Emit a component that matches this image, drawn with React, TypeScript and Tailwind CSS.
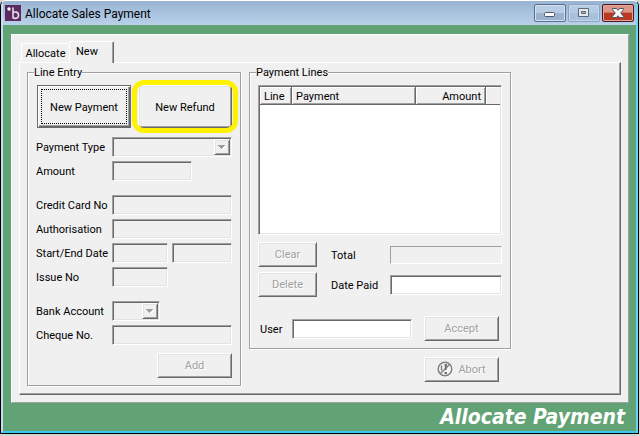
import React from 'react';
import { clsx } from 'clsx';

const SUNKEN =
  'border border-t-[#a0a0a0] border-l-[#a0a0a0] border-r-white border-b-white shadow-[inset_1px_1px_0_#696969,inset_-1px_-1px_0_#e3e3e3]';
const RAISED =
  'border border-t-white border-l-white border-r-[#696969] border-b-[#696969] shadow-[inset_1px_1px_0_#e3e3e3,inset_-1px_-1px_0_#a0a0a0]';

interface PushButtonProps {
  children: React.ReactNode;
  className?: string;
  disabled?: boolean;
}

const PushButton: React.FC<PushButtonProps> = ({ children, className, disabled }) => (
  <button
    type="button"
    disabled={disabled}
    className={clsx(
      RAISED,
      'flex items-center justify-center bg-[#f0f0f0]',
      disabled && 'text-[#a0a0a0] [text-shadow:1px_1px_0_#fff]',
      className
    )}
  >
    {children}
  </button>
);

interface FieldProps {
  id: string;
  className?: string;
  disabled?: boolean;
  label?: string;
}

const Field: React.FC<FieldProps> = ({ id, className, disabled, label }) => (
  <input
    id={id}
    type="text"
    aria-label={label}
    disabled={disabled}
    className={clsx(SUNKEN, 'h-5 min-w-0 px-1 outline-none', disabled ? 'bg-[#f0f0f0]' : 'bg-white', className)}
  />
);

const Combo: React.FC<{ id: string; className?: string }> = ({ id, className }) => (
  <div className={clsx('relative h-5', className)}>
    <select id={id} disabled className={clsx(SUNKEN, 'h-full w-full appearance-none bg-[#f0f0f0] opacity-100')} />
    <span className={clsx(RAISED, 'pointer-events-none absolute top-0.5 right-0.5 bottom-0.5 flex w-4 items-center justify-center bg-[#f0f0f0]')}>
      <svg width="8" height="5" viewBox="0 0 8 5" shapeRendering="crispEdges">
        <path d="M1 1h7v1h-1v1h-1v1h-1v1h-1z" fill="#fff" />
        <path d="M0 0h7v1h-1v1h-1v1h-1v1h-1v-1h-1v-1h-1v-1h-1z" fill="#a0a0a0" />
      </svg>
    </span>
  </div>
);

const Row: React.FC<{ id: string; label: string; children: React.ReactNode }> = ({ id, label, children }) => (
  <div className="flex items-center">
    <label htmlFor={id} className="w-19 shrink-0 pt-0.5 whitespace-nowrap">{label}</label>
    <div className="flex min-w-0 flex-1 gap-1">{children}</div>
  </div>
);

const Group: React.FC<{ title: string; className?: string; children: React.ReactNode }> = ({ title, className, children }) => (
  <fieldset className={clsx('min-w-0 border border-[#a0a0a0] px-2 pb-[7px] shadow-[inset_1px_1px_0_#fff,1px_1px_0_#fff]', className)}>
    <legend className="-ml-0.5 h-3.5 bg-[#f0f0f0] leading-4">{title}</legend>
    {children}
  </fieldset>
);

const TitleBar: React.FC = () => (
  <header className="flex h-6 items-start bg-linear-to-b from-[#98b4d2] to-[#b9d1ea] px-0.5">
    <svg className="mt-1 shrink-0" width="16" height="16" viewBox="0 0 16 16">
      <rect width="16" height="16" fill="#5c2a5c" />
      <circle cx="4" cy="4" r="1.7" fill="#fff" />
      <path d="M8 2.5v11M8 8c1.500-1.600 5.500-1.400 5.500 2.200s-4 3.800-5.500 2.200" fill="none" stroke="#eadcea" strokeWidth="1.6" />
    </svg>
    <h1 className="ml-1 flex-1 pt-px text-[12px] leading-6">Allocate Sales Payment</h1>
    <div className="mt-[3px] flex gap-0.5">
      <button type="button" aria-label="Minimize" className="flex h-[18px] w-8 items-center justify-center rounded-xs border border-[#5a6f8c] bg-linear-to-b from-[#b8cde4] from-50% to-[#9ab4d0] to-50% shadow-[inset_0_0_0_1px_#d3e2f2]">
        <svg className="mt-1" width="12" height="6" viewBox="0 0 12 6">
          <rect x="0.5" y="0.5" width="10" height="4" rx="1" fill="#fff" stroke="#535666" />
        </svg>
      </button>
      <button type="button" aria-label="Maximize" disabled className="flex h-[18px] w-8 items-center justify-center rounded-xs border border-[#8ba3c0] bg-linear-to-b from-[#b5cbe3] from-50% to-[#a8c1dc] to-50% shadow-[inset_0_0_0_1px_#c5d7ea]">
        <svg width="12" height="10" viewBox="0 0 12 10">
          <path d="M.5 .5h10v8h-10z" fill="#e4e8ec" stroke="#5f6878" />
          <path d="M3.500 3.500h4v2h-4z" fill="#9db9d6" stroke="#5f6878" />
        </svg>
      </button>
      <button type="button" aria-label="Close" className="flex h-[18px] w-8 items-center justify-center rounded-xs border border-[#4d1522] bg-linear-to-b from-[#dd9688] from-45% to-[#b93a22] to-50% shadow-[inset_0_0_0_1px_#e2a79b]">
        <svg width="12" height="10" viewBox="0 0 12 10">
          <path d="M.5 .5h4l1.500 1.800 1.500-1.800h4v1.200l-2.800 3.300 2.800 3.300v1.200h-4l-1.500-1.800-1.500 1.800h-4v-1.200l2.800-3.300-2.800-3.300z" fill="#f8f8f8" stroke="#4f5263" />
        </svg>
      </button>
    </div>
  </header>
);

const LineEntry: React.FC = () => (
  <Group title="Line Entry" className="w-[214px]">
    <div className="flex justify-between pt-1.5 pl-px">
      <button type="button" className="h-[43px] w-[94px] border border-[#696969] bg-[#f0f0f0] p-[3px] shadow-[inset_1px_1px_0_#fff,inset_-1px_-1px_0_#696969,inset_-2px_-2px_0_#a0a0a0]">
        <span className="flex h-full items-center justify-center border border-dotted border-black pt-0.5">New Payment</span>
      </button>
      <div className="relative">
        <PushButton className="h-[43px] w-[94px] pt-0.5">New Refund</PushButton>
        <span className="pointer-events-none absolute -inset-x-1.5 -inset-y-[5px] rounded-xl border-5 border-[#fff200]" />
      </div>
    </div>
    <div className="mt-[9px] grid grid-cols-1 gap-1">
      <Row id="type" label="Payment Type"><Combo id="type" className="flex-1" /></Row>
      <Row id="amount" label="Amount"><Field id="amount" disabled className="w-20" /></Row>
    </div>
    <div className="mt-3.5 grid grid-cols-1 gap-1">
      <Row id="card" label="Credit Card No"><Field id="card" disabled className="flex-1" /></Row>
      <Row id="auth" label="Authorisation"><Field id="auth" disabled className="flex-1" /></Row>
      <Row id="start" label="Start/End Date">
        <Field id="start" disabled className="w-14" />
        <Field id="end" label="End Date" disabled className="flex-1" />
      </Row>
      <Row id="issue" label="Issue No"><Field id="issue" disabled className="w-14" /></Row>
    </div>
    <div className="mt-3.5 grid grid-cols-1 gap-1">
      <Row id="bank" label="Bank Account"><Combo id="bank" className="w-12" /></Row>
      <Row id="cheque" label="Cheque No."><Field id="cheque" disabled className="flex-1" /></Row>
    </div>
    <PushButton disabled className="mt-2 ml-auto h-[25px] w-[75px]">Add</PushButton>
  </Group>
);

const HEAD =
  'border-r border-b border-[#696969] bg-[#f0f0f0] px-1 pt-0.5 font-normal shadow-[inset_1px_1px_0_#fff,inset_-1px_-1px_0_#a0a0a0]';

const PaymentLines: React.FC = () => (
  <Group title="Payment Lines">
    <div className={clsx(SUNKEN, 'mt-1.5 h-[150px] bg-white p-px')}>
      <table className="w-full table-fixed border-separate border-spacing-0">
        <thead>
          <tr className="h-[18px]">
            <th className={clsx(HEAD, 'w-8 text-left')}>Line</th>
            <th className={clsx(HEAD, 'text-left')}>Payment</th>
            <th className={clsx(HEAD, 'w-[70px] text-right')}>Amount</th>
            <th className="w-3.5 border-b border-[#696969] bg-[#f0f0f0] shadow-[inset_1px_1px_0_#fff]" />
          </tr>
        </thead>
        <tbody />
      </table>
    </div>
    <div className="mt-[7px] grid grid-cols-[59px_59px_1fr] items-center gap-y-[5px]">
      <PushButton disabled className="h-[25px]">Clear</PushButton>
      <label htmlFor="total" className="pt-0.5 pl-3.5">Total</label>
      <input id="total" type="text" readOnly className="ml-3.5 h-[18px] min-w-0 border border-t-[#a0a0a0] border-l-[#a0a0a0] border-r-white border-b-white bg-[#f0f0f0]" />
      <PushButton disabled className="h-[25px]">Delete</PushButton>
      <label htmlFor="paid" className="pt-0.5 pl-3.5 whitespace-nowrap">Date Paid</label>
      <Field id="paid" className="ml-3.5" />
    </div>
    <div className="mt-[19px] flex items-center pr-[3px] pl-0.5">
      <label htmlFor="user" className="w-8 pt-0.5">User</label>
      <Field id="user" className="mr-3 flex-1" />
      <PushButton disabled className="h-[25px] w-[75px]">Accept</PushButton>
    </div>
  </Group>
);

export default function App() {
  return (
    <div className="bg-[#d4d4d4] pr-px pb-0.5 font-[Roboto,sans-serif] text-[11px] leading-3.5 text-black">
      <div className="overflow-hidden rounded-t-md border border-black border-t-white">
        <div className="border-x-2 border-b-2 border-r-[#6fd3f3] border-b-[#3cc8f0] border-l-[#c9dcf2]">
          <TitleBar />
          <div className="bg-[#61a375] pt-[9px] pr-[7px] pl-2">
            <main className="border border-t-white border-l-white border-r-[#a0a0a0] border-b-[#a0a0a0] bg-[#f0f0f0] px-[7px] pt-1.5 pb-[7px]">
              <div role="tablist" className="flex items-end pl-0.5">
                <button type="button" role="tab" aria-selected="false" className="h-[19px] w-12 rounded-t-xs border-t border-l border-white pt-0.5 text-center">Allocate</button>
                <button type="button" role="tab" aria-selected="true" className="relative -mb-px h-[22px] w-[45px] rounded-t-xs border-t border-r border-l border-white border-r-[#696969] bg-[#f0f0f0] pb-0.5 pl-1.5 text-left shadow-[inset_-1px_0_0_#a0a0a0]">New</button>
              </div>
              <div className="flex items-start gap-2 border border-t-white border-l-white border-r-[#696969] border-b-[#696969] pt-0.5 pb-2 pl-[7px] shadow-[inset_-1px_-1px_0_#a0a0a0]">
                <LineEntry />
                <div className="w-[262px]">
                  <PaymentLines />
                  <PushButton disabled className="mt-2 mr-3 ml-auto h-[25px] w-[75px] gap-1">
                    <svg width="17" height="17" viewBox="0 0 17 17" fill="none">
                      <circle cx="9" cy="9" r="7" stroke="#fff" />
                      <circle cx="8" cy="8" r="6.800" fill="#f6f6f6" stroke="#808080" strokeWidth="1.500" />
                      <path d="M12.500 3.500L3.500 12.500" stroke="#808080" strokeWidth="1.500" />
                      <path d="M4.500 4.500v5" stroke="#808080" strokeWidth="1.500" />
                      <path d="M7.500 3h2.500l-.5 6h-1.500zM7.500 11h2.500v2h-2.500z" fill="#707070" />
                    </svg>
                    Abort
                  </PushButton>
                </div>
              </div>
            </main>
            <h2 className="pr-1 text-right font-['DejaVu_Sans_Condensed','DejaVu_Sans',sans-serif] text-[21px] leading-7 font-bold text-white italic">Allocate Payment</h2>
          </div>
        </div>
      </div>
    </div>
  );
}
